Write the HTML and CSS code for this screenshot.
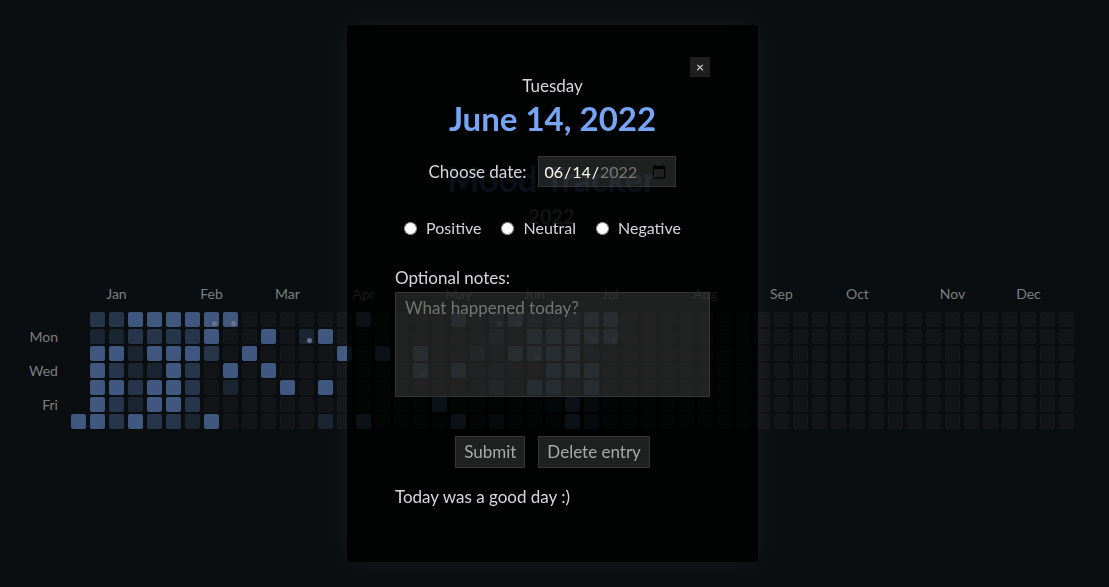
FILE: index.html
```html
<!DOCTYPE html>
<html lang="en-US">
<head>
<meta charset="utf-8">
<title>Mood Tracker</title>
<link rel="stylesheet" href="styles.css">
</head>
<body>
<main class="tracker">
  <h1 class="tracker-title">Mood Tracker</h1>
  <h2 class="tracker-year">2022</h2>
  <table class="calendar">
    <thead>
      <tr>
        <td></td>
        <th colspan="5">Jan</th><th colspan="5">Feb</th><th colspan="3">Mar</th>
        <th colspan="5">Apr</th><th colspan="5">May</th><th colspan="3">Jun</th>
        <th colspan="5">Jul</th><th colspan="5">Aug</th><th colspan="3">Sep</th>
        <th colspan="5">Oct</th><th colspan="5">Nov</th><th colspan="3">Dec</th>
        <td></td>
      </tr>
    </thead>
    <tbody id="days"></tbody>
  </table>
</main>
<div class="overlay">
  <section class="modal" role="dialog" aria-labelledby="entry-date">
    <button class="close" type="button" aria-label="Close">×</button>
    <p class="weekday">Tuesday</p>
    <h2 class="entry-date" id="entry-date">June 14, 2022</h2>
    <form class="entry">
      <div class="date-row">
        <label for="date">Choose date:</label>
        <input class="field date" id="date" type="date" value="2022-06-14">
      </div>
      <div class="moods">
        <label class="mood"><input type="radio" name="mood">Positive</label>
        <label class="mood"><input type="radio" name="mood">Neutral</label>
        <label class="mood"><input type="radio" name="mood">Negative</label>
      </div>
      <label class="notes-label" for="notes">Optional notes:</label>
      <textarea class="field notes" id="notes" placeholder="What happened today?"></textarea>
      <div class="actions">
        <button class="field action" type="button">Submit</button>
        <button class="field action" type="button">Delete entry</button>
      </div>
    </form>
    <p class="saved">Today was a good day :)</p>
  </section>
</div>
<script src="calendar.js"></script>
</body>
</html>
```
FILE: styles.css
```css
* { box-sizing: border-box; }
body {
  margin: 0;
  min-height: 100vh;
  padding-right: 6px;
  display: flex;
  align-items: center;
  justify-content: center;
  background: #0a0e11;
  color: #d5d7da;
  font: 17px/20px Lato, "Open Sans", sans-serif;
}
h1, h2, p { margin: 0; }
button, input, textarea { font: inherit; }

.tracker { padding-top: 2px; text-align: center; }
.tracker-title { font-size: 34px; line-height: 40px; color: #38528a; }
.tracker-year { margin-top: 5px; font-size: 20px; line-height: 24px; color: #65686b; }
.calendar { margin-top: 55px; border-spacing: 4px 2px; font-size: 14px; color: #7b7e80; }
.calendar th { padding: 0; font-weight: 400; }
.calendar thead th {
  max-width: 1px;
  height: 25px;
  line-height: 18px;
  vertical-align: top;
  white-space: nowrap;
}
.calendar tbody th {
  width: 34px;
  height: 15px;
  padding-right: 9px;
  line-height: 15px;
  text-align: right;
}
.day { padding: 0; min-width: 15px; width: 15px; height: 15px; border-radius: 2px; line-height: 0; }
.level-0 { background: #131417; border: 1px solid #16171a; }
.level-1 { background: #1b2431; }
.level-2 { background: #27354a; }
.level-3 { background: #40587f; }
.noted::after {
  content: "";
  display: block;
  width: 5px;
  height: 5px;
  margin: 8px 2px 0 auto;
  border-radius: 50%;
  background: #687589;
}

.overlay {
  position: fixed;
  inset: 0;
  padding-right: 4px;
  display: flex;
  align-items: center;
  justify-content: center;
}
.modal {
  display: flex;
  flex-direction: column;
  width: 411px;
  padding: 32px 48px 55px;
  border-radius: 4px;
  background: rgba(0, 1, 0, 0.82);
  box-shadow: 0 0 32px rgba(255, 255, 255, 0.06);
}
.close {
  align-self: flex-end;
  width: 20px;
  height: 20px;
  padding: 0;
  border: 0;
  background: #1e1f1e;
  color: #c0c0c0;
  font-size: 14px;
  font-weight: 700;
  line-height: 20px;
}
.weekday { margin-top: -1px; text-align: center; }
.entry-date { margin-top: 2px; text-align: center; font-size: 33px; line-height: 40px; color: #76a5f5; }
.date-row { display: flex; align-items: center; justify-content: center; gap: 12px; margin-top: 18px; }
.field { border: 1px solid #343534; border-radius: 0; background: rgba(250, 255, 250, 0.12); }
.date { width: 138px; height: 31px; padding: 0 6px 0 4px; font-size: 16px; color: #fffff0; }
.date::-webkit-datetime-edit-year-field { color: #777876; }
.moods { display: flex; justify-content: center; margin-top: 31px; font-size: 16px; }
.mood { display: flex; align-items: center; gap: 9px; margin-right: 20px; }
.mood input { width: 13px; height: 13px; margin: 0; }
.notes-label { display: block; margin-top: 30px; }
.notes {
  display: block;
  width: 100%;
  height: 105px;
  margin-top: 4px;
  padding: 5px 9px;
  color: #fffff0;
  resize: none;
}
.notes::placeholder { color: #747573; }
.actions { display: flex; justify-content: center; gap: 13px; margin-top: 39px; }
.action { height: 32px; padding: 0 8px; color: #a8a9a8; }
.saved { margin-top: 19px; }
```
FILE: calendar.js
```js
// Mood level per week for each weekday, Sunday first, grouped by ten weeks.
// "." marks a day outside the year; weeks past the end of a string are empty.
const weeks = 53;
const rows = [
  { label: "", moods: ".223333330 0000030000 302321233", notes: [7, 8, 22, 23] },
  { label: "Mon", moods: ".112222300 3013000000 002033333", notes: [12, 27, 28] },
  { label: "", moods: ".331333203 0000303030 020333310", notes: [24] },
  { label: "Wed", moods: ".321132030 3000000030 301003330", notes: [18] },
  { label: "", moods: ".332332010 0303000000 002033130", notes: [] },
  { label: "Fri", moods: ".321332000 0000000003 000001320", notes: [] },
  { label: "", moods: "3323221300 0001030000 302000320", notes: [] }
];

const body = document.getElementById("days");
for (const { label, moods, notes } of rows) {
  const levels = moods.replaceAll(" ", "");
  const tr = body.insertRow();
  const th = document.createElement("th");
  th.textContent = label;
  tr.append(th);
  for (let week = 0; week < weeks; week++) {
    const td = tr.insertCell();
    const level = levels[week] || "0";
    td.className = level === "." ? "outside" : `day level-${level}`;
    if (notes.includes(week)) td.classList.add("noted");
  }
}
```
